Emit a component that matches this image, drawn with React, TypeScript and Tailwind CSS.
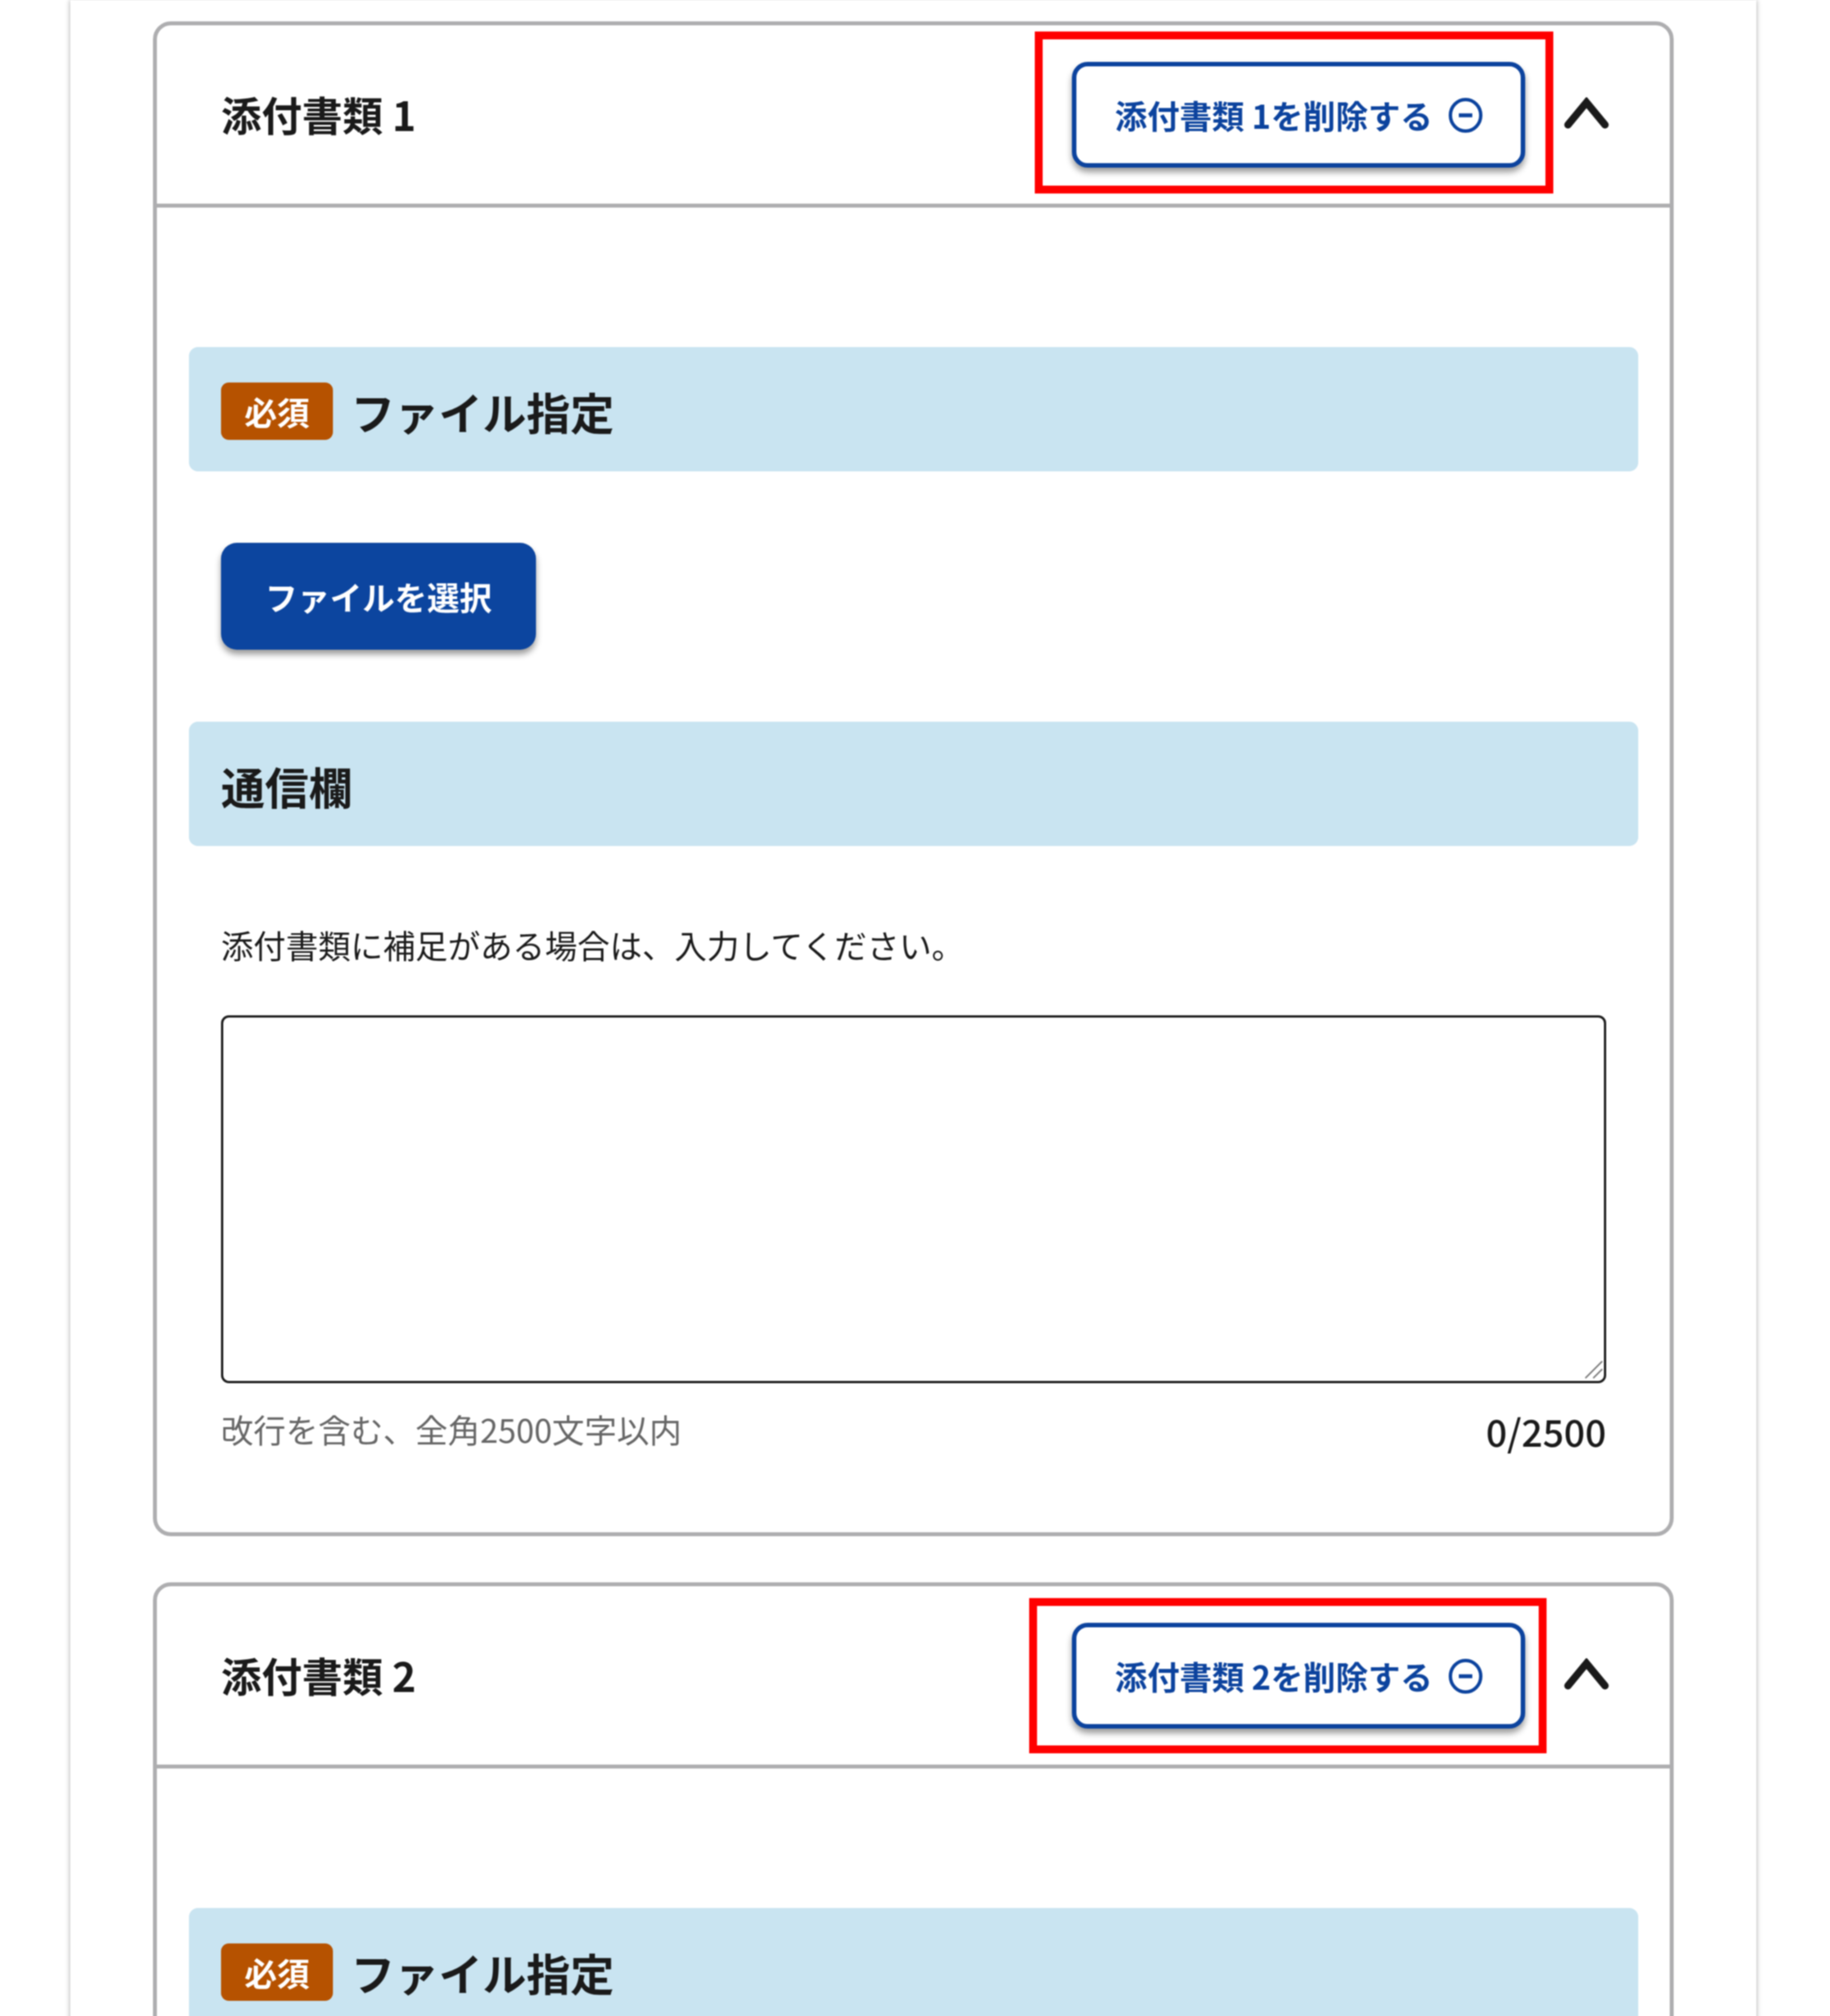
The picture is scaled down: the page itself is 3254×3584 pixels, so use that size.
import React from "react";

const FONT = "font-['Noto_Sans_CJK_JP','Noto_Sans',sans-serif]";

function MinusCircle() {
  return (
    <svg width="60" height="62" viewBox="0 0 60 62" fill="none" className="shrink-0">
      <ellipse cx="30" cy="31" rx="27" ry="28" stroke="#0c439e" strokeWidth="6" />
      <path d="M18 31H42" stroke="#0c439e" strokeWidth="7" />
    </svg>
  );
}

function Chevron() {
  return (
    <svg width="80" height="56" viewBox="0 0 80 56" fill="none" className="shrink-0">
      <path d="M7 49L40 9L73 49" stroke="#1a1a1a" strokeWidth="13" strokeLinecap="round" strokeLinejoin="miter" />
    </svg>
  );
}

function SectionHead({ children }: { children: React.ReactNode }) {
  return (
    <div className="ml-[57px] mr-[56px] flex h-[221px] items-center gap-[32px] rounded-[16px] bg-[#c9e4f1] pl-[57px] pt-[6px]">
      {children}
    </div>
  );
}

function Card({ n, redClass }: { n: number; redClass: string }) {
  return (
    <section className="rounded-[32px] border-[7px] border-[#aeaeb0] bg-white">
      <header className="flex h-[324px] items-center border-b-[7px] border-[#aeaeb0] pl-[114px] pr-[108px]">
        <h2 className="-mt-[4px] text-[72px] font-bold leading-none text-[#1a1a1a]">添付書類 {n}</h2>
        <div className="relative ml-auto">
          <button className="flex h-[188px] w-[806px] items-center justify-center gap-[28px] rounded-[28px] border-[8px] border-[#0c439e] bg-white pt-[2px] text-[57.6px] font-bold text-[#0c439e] shadow-[0_8px_12px_rgba(0,0,0,0.4)]">
            <span className="leading-none">添付書類 {n}を削除する</span>
            <MinusCircle />
          </button>
          <div className={`pointer-events-none absolute border-[14px] border-[#ff0000] ${redClass}`} />
        </div>
        <div className="ml-[69px] -mt-[6px]">
          <Chevron />
        </div>
      </header>

      <div className="pt-[248px]">
        <SectionHead>
          <span className="flex h-[102px] w-[199px] items-center justify-center rounded-[14px] bg-[#b65200] text-[58px] font-bold leading-none text-white">
            必須
          </span>
          <h3 className="text-[78px] font-bold leading-none text-[#1a1a1a]">ファイル指定</h3>
        </SectionHead>

        <div className="ml-[114px] mr-[113px] mt-[127px]">
          <button className="flex h-[190px] w-[560px] items-center justify-center rounded-[28px] bg-[#0c459f] text-[57.6px] font-bold text-white shadow-[0_8px_12px_rgba(0,0,0,0.4)]">
            ファイルを選択
          </button>
        </div>

        <div className="mt-[128px]">
          <SectionHead>
            <h3 className="text-[78px] font-bold leading-none text-[#1a1a1a]">通信欄</h3>
          </SectionHead>
        </div>

        <div className="ml-[114px] mr-[113px]">
          <p className="mt-[135px] text-[57.6px] leading-[80px] text-[#1a1a1a]">
            添付書類に補足がある場合は、入力してください。
          </p>
          <div className="relative mt-[86px]">
            <textarea
              readOnly
              className="block h-[654px] w-full resize-none rounded-[14px] border-[4px] border-[#1a1a1a] bg-white"
            />
            <svg width="32" height="32" viewBox="0 0 32 32" fill="none" className="absolute bottom-[8px] right-[6px]">
              <path d="M1 31L31 1M15 31L31 15" stroke="#777" strokeWidth="2.5" />
            </svg>
          </div>
          <div className="mt-[41px] flex items-start justify-between pb-[138px]">
            <p className="text-[57.6px] leading-[80px] text-[#666666]">改行を含む、全角2500文字以内</p>
            <p className="text-[66px] font-medium leading-[86px] text-[#1a1a1a]">0/2500</p>
          </div>
        </div>
      </div>
    </section>
  );
}

export default function App() {
  return (
    <div className={`h-[3584px] w-[3254px] overflow-hidden bg-white ${FONT}`}>
      <main className="ml-[125px] min-h-full w-[2998px] bg-white px-[147px] pt-[38px] blur-[1px] shadow-[0_0_9px_rgba(0,0,0,0.35)]">
        <div className="flex flex-col gap-[82px]">
          <Card n={1} redClass="-bottom-[46px] -left-[66px] -right-[50px] -top-[54px]" />
          <Card n={2} redClass="-bottom-[44px] -left-[76px] -right-[38px] -top-[44px]" />
        </div>
      </main>
    </div>
  );
}
